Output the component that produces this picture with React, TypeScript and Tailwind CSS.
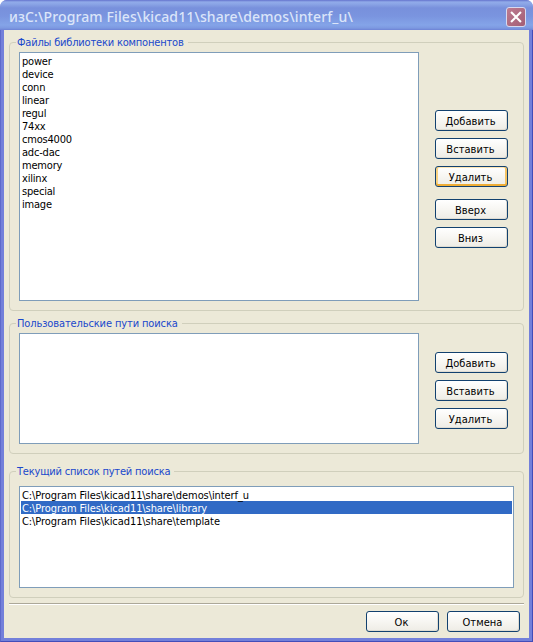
import type { ReactNode } from "react";

const libraries = ["power", "device", "conn", "linear", "regul", "74xx", "cmos4000", "adc-dac", "memory", "xilinx", "special", "image"];

const searchPaths = [
  "C:\\Program Files\\kicad11\\share\\demos\\interf_u",
  "C:\\Program Files\\kicad11\\share\\library",
  "C:\\Program Files\\kicad11\\share\\template",
];

function Button({ children, focused = false, className = "" }: { children: ReactNode; focused?: boolean; className?: string }) {
  return (
    <button
      className={`flex h-[21px] w-[73px] shrink-0 items-center justify-center rounded-[3px] border border-[#12416f] bg-linear-to-b from-white via-[#f7f6f2] to-[#eeece5] pr-[2px] pt-px text-[11px] leading-[13px] tracking-[0.05px] text-black ${
        focused ? "shadow-[inset_0_-2px_0_#efad35,inset_2px_0_0_#f9d382,inset_-2px_0_0_#f5c465,inset_0_1px_0_#fce6b4]" : "shadow-[inset_-1px_-1px_0_#dfdcd2]"
      } ${className}`}
    >
      {children}
    </button>
  );
}

function Group({ title, className, titleClassName, children }: { title: string; className: string; titleClassName: string; children: ReactNode }) {
  return (
    <fieldset className={`w-[515px] min-w-0 shrink-0 rounded-[4px] border border-[#d0cfbc] pl-1.5 ${className}`}>
      <legend className={`h-[14px] whitespace-nowrap pl-px pr-[4px] pt-px text-[11px] leading-[14px] text-[#1a48cc] ${titleClassName}`}>{title}</legend>
      {children}
    </fieldset>
  );
}

export default function App() {
  return (
    <div className="flex h-[642px] w-[533px] flex-col overflow-hidden rounded-t-[7px] bg-[#7380da] font-['DejaVu_Sans_Condensed','DejaVu_Sans',sans-serif] [font-stretch:condensed] text-[11px]">
      <header className="flex h-[30px] shrink-0 items-center justify-between bg-[linear-gradient(#6473cd_0,#91abe9_2px,#8ba5e6_4px,#7890dc_8px,#7a94df_16px,#84a4e8_25px,#7d99e1_28px,#6d82d5_30px)] pl-[9px] pr-[7px]">
        <h1 className="whitespace-nowrap pt-[3px] font-['Noto_Sans','DejaVu_Sans',sans-serif] text-[14px] font-medium leading-[18px] tracking-[0.12px] text-[#dbe5f9] [font-stretch:normal]">
          изC:\Program Files\kicad11\share\demos\interf_u\
        </h1>
        <button className="mt-[3px] flex size-[20px] items-center justify-center rounded-[3px] border border-[#d7d9ef] bg-linear-to-br from-[#bd7b90] to-[#a35e75]">
          <svg viewBox="0 0 12 12" className="size-3" stroke="white" strokeWidth="2.1" strokeLinecap="square">
            <path d="M1.8 1.8 10.2 10.2M10.2 1.8 1.8 10.2" />
          </svg>
        </button>
      </header>
      <div className="flex min-h-0 flex-1 border-x border-b border-l-[#5e6acb] border-r-[#414cb8] border-b-[#434db9] px-[3px] pb-[3px]">
        <main className="flex min-w-0 flex-1 flex-col bg-[#ece9d8] pl-[5px] pt-[5px]">
          <Group title="Файлы библиотеки компонентов" className="h-[276px]" titleClassName="tracking-[-0.19px]">
            <div className="flex pl-[3px] pt-[3px]">
              <ul className="h-[249px] w-[400px] border border-[#7f9db9] bg-white pl-[2px] pt-[2px] tracking-[-0.2px]">
                {libraries.map((name) => (
                  <li key={name} className="h-[13px] leading-[13px]">{name}</li>
                ))}
              </ul>
              <div className="flex flex-col gap-[7px] pl-4 pt-[58px]">
                <Button>Добавить</Button>
                <Button>Вставить</Button>
                <Button focused>Удалить</Button>
                <Button className="mt-[5px]">Вверх</Button>
                <Button>Вниз</Button>
              </div>
            </div>
          </Group>
          <Group title="Пользовательские пути поиска" className="mt-[5px] h-[138px]" titleClassName="tracking-[-0.12px]">
            <div className="flex pl-[3px] pt-[3px]">
              <div className="h-[111px] w-[400px] border border-[#7f9db9] bg-white" />
              <div className="flex flex-col gap-[7px] pl-4 pt-[19px]">
                <Button>Добавить</Button>
                <Button>Вставить</Button>
                <Button>Удалить</Button>
              </div>
            </div>
          </Group>
          <Group title="Текущий список путей поиска" className="mt-[10px] h-[134px]" titleClassName="tracking-[-0.19px]">
            <div className="pl-[3px] pt-[8px]">
              <ul className="h-[102px] w-[495px] border border-[#7f9db9] bg-white p-px tracking-[-0.08px]">
                {searchPaths.map((path, i) => (
                  <li key={path} className={`h-[13px] pl-px pt-px leading-[13px] ${i === 1 ? "bg-[#316ac5] text-white" : ""}`}>{path}</li>
                ))}
              </ul>
            </div>
          </Group>
          <hr className="mt-[5px] h-[2px] w-[515px] shrink-0 border-0 border-t border-[#aca899] bg-white" />
          <footer className="flex justify-end gap-[8px] pr-[9px] pt-[6px]">
            <Button>Ок</Button>
            <Button>Отмена</Button>
          </footer>
        </main>
      </div>
    </div>
  );
}
